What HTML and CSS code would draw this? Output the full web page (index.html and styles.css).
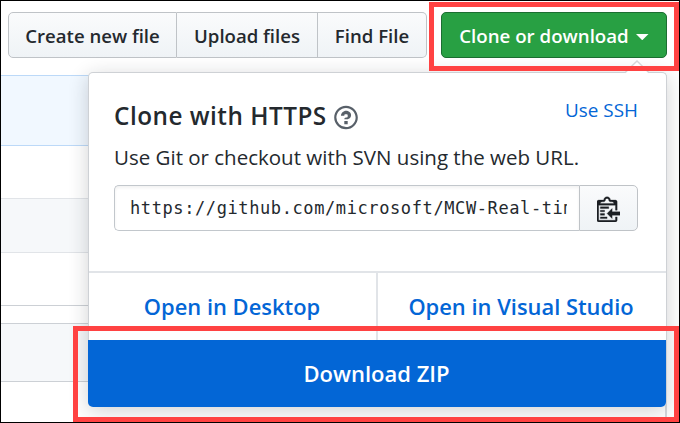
FILE: index.html
```html
<!DOCTYPE html>
<html lang="en">
<head>
<meta charset="utf-8">
<title>Clone or download</title>
<link rel="stylesheet" href="styles.css">
</head>
<body>
<div class="frame">
  <header class="toolbar">
    <div class="group">
      <button class="btn create">Create new file</button>
      <button class="btn upload">Upload files</button>
      <button class="btn find">Find File</button>
    </div>
    <button class="btn primary">Clone or download<span class="caret"></span></button>
  </header>
  <main class="files">
    <div class="row commit"></div>
    <div class="row"></div>
    <div class="row alt"></div>
    <div class="row last"></div>
    <div class="readme"><div class="readme-head"></div></div>
  </main>

  <section class="popover">
    <svg class="arrow" width="26" height="14" viewBox="0 0 26 14"><path d="M0.5 14 13 1.2 25.5 14z" fill="#fff"/><path d="M1 12.7 13 1 25 12.7" fill="none" stroke="#d5d6d8" stroke-width="1.4"/></svg>
    <div class="clone">
      <div class="heading">
        <h1>Clone with HTTPS</h1>
        <svg class="help" width="24" height="27" viewBox="0 0 14 16"><path fill="#586069" fill-rule="evenodd" d="M6 10h2v2H6v-2zm4-3.5C10 8.64 8 9 8 9H6c0-.55.45-1 1-1h.5c.28 0 .5-.22.5-.5v-1c0-.28-.22-.5-.5-.5h-1c-.28 0-.5.22-.5.5V7H4c0-1.5 1.5-3 3-3s3 1 3 2.5zM7 2.3c3.14 0 5.7 2.56 5.7 5.7s-2.56 5.7-5.7 5.7A5.71 5.71 0 0 1 1.3 8c0-3.14 2.56-5.7 5.7-5.7zM7 1C3.14 1 0 4.14 0 8s3.14 7 7 7 7-3.14 7-7-3.14-7-7-7z"/></svg>
        <a class="ssh">Use SSH</a>
      </div>
      <p>Use Git or checkout with SVN using the web URL.</p>
      <div class="url">
        <div class="field"><span>https://github.com/microsoft/MCW-Real-tim</span></div>
        <button class="btn copy"><svg width="23.5" height="27" viewBox="0 0 14 16"><path fill="#1b1f23" stroke="#1b1f23" stroke-width=".2" fill-rule="evenodd" d="M2 13h4v1H2v-1zm5-6H2v1h5V7zm2 3V8l-3 3 3 3v-2h5v-2H9zM4.5 9H2v1h2.5V9zM2 12h2.5v-1H2v1zm9 1h1v2c-.02.28-.11.52-.3.7-.19.18-.42.28-.7.3H1c-.55 0-1-.45-1-1V4c0-.55.45-1 1-1h3c0-1.11.89-2 2-2 1.11 0 2 .89 2 2h3c.55 0 1 .45 1 1v5h-1V6H1v9h10v-2zM2 5h8c0-.55-.45-1-1-1H8c-.55 0-1-.45-1-1s-.45-1-1-1-1 .45-1 1-.45 1-1 1H3c-.55 0-1 .45-1 1z"/></svg></button>
      </div>
    </div>
    <div class="open">
      <a>Open in Desktop</a>
      <a>Open in Visual Studio</a>
    </div>
    <a class="zip">Download ZIP</a>
  </section>

  <div class="mark mark-top"></div>
  <div class="mark mark-bottom"></div>
</div>
</body>
</html>
```
FILE: styles.css
```css
* { box-sizing: border-box; }
body { margin: 0; font-family: "Open Sans", sans-serif; color: #24292e; }
.frame { position: relative; width: 680px; height: 423px; border: 1px solid #000; background: #fff; overflow: hidden; }

.toolbar { display: flex; gap: 14px; height: 74px; padding: 11px 0 0 7px; }
.group { display: flex; }
.btn {
  height: 46px; padding: 2px 0 0; margin: 0; white-space: nowrap;
  font: 600 18.6px/1 "Open Sans", sans-serif; color: #24292e;
  border: 1px solid #bfc3c7; background: linear-gradient(#fafbfc, #eff3f6);
  display: flex; align-items: center; justify-content: center;
}
.create { width: 169px; border-radius: 5px 0 0 5px; }
.upload { width: 141px; border-left: 0; }
.find { width: 109px; border-left: 0; border-radius: 0 5px 5px 0; }
.primary { width: 226px; color: #fff; font-size: 18.7px; border-color: #1b6e31; border-radius: 5px; background: #28a043; }
.caret { width: 13px; height: 6.5px; margin: 2px 0 0 7px; background: #fff; clip-path: polygon(0 0, 100% 0, 50% 100%); }

.files { width: 666px; border-right: 2px solid #d6d9dd; }
.row { height: 54px; border-top: 1px solid #e1e4e8; }
.commit { height: 71px; background: #f1f8ff; border: solid #bcd9f8; border-width: 1px 0; }
.commit + .row { height: 52px; border-top: 0; }
.alt { background: #f6f8fa; }
.last { height: 54px; border-bottom: 1px solid #ccd0d5; }
.readme { margin-top: 17px; height: 120px; border-top: 1px solid #ccd0d5; }
.readme-head { height: 58px; background: #f6f8fa; border-bottom: 1px solid #ccd0d5; }

.popover {
  position: absolute; left: 87px; top: 71px; width: 579px; height: 335px;
  display: flex; flex-direction: column; background: #fff;
  border: 1px solid #ced1d5; border-bottom: 0; border-radius: 5px;
  box-shadow: 0 4px 20px rgba(27,31,35,.2);
}
.arrow { position: absolute; left: 535px; top: -13px; }
.clone { height: 201px; padding: 25px 28px 0 25px; border-bottom: 2px solid #e1e4e8; }
.heading { display: flex; height: 40px; }
h1 { margin: 0; font-size: 24.3px; font-weight: 600; line-height: 36px; letter-spacing: .5px; white-space: nowrap; }
.help { margin: 6px 0 0 7px; flex: none; }
.ssh { margin-left: auto; font-size: 18.9px; line-height: 24px; color: #0366d6; }
p { margin: 4px 0 0; font-size: 20.5px; line-height: 30px; white-space: nowrap; }
.url { display: flex; margin-top: 13px; }
.field {
  width: 465px; height: 46px; padding: 0 12px 0 15px; display: flex; align-items: center;
  border: 1px solid #c2c7cc; border-right: 0; border-radius: 5px 0 0 5px;
  box-shadow: inset 0 2px 3px rgba(27,31,35,.06);
}
.field span { overflow: hidden; white-space: nowrap; font: 17px/30px "DejaVu Sans Mono", monospace; letter-spacing: .6px; }
.copy { width: 59px; padding: 0; border-radius: 0 5px 5px 0; }

.open { display: flex; height: 67px; font-size: 21.9px; font-weight: 600; color: #0366d6; }
.open a { flex: 1; text-align: center; line-height: 67px; white-space: nowrap; }
.open a:first-child { flex: 0 0 287px; padding-right: 1px; }
.open a + a { border-left: 2px solid #e1e4e8; padding-right: 2px; }
.zip {
  flex: 1; margin-left: -1px; padding-right: 1px; text-align: center; color: #fff; background: #0366d6;
  font-size: 22px; font-weight: 600; line-height: 67px; border-radius: 0 0 5px 5px;
}

.mark { position: absolute; border: 5px solid #ff4242; }
.mark-top { left: 428px; top: 1px; width: 250px; height: 69px; }
.mark-bottom { left: 72px; top: 325px; width: 606px; height: 96px; }
```
